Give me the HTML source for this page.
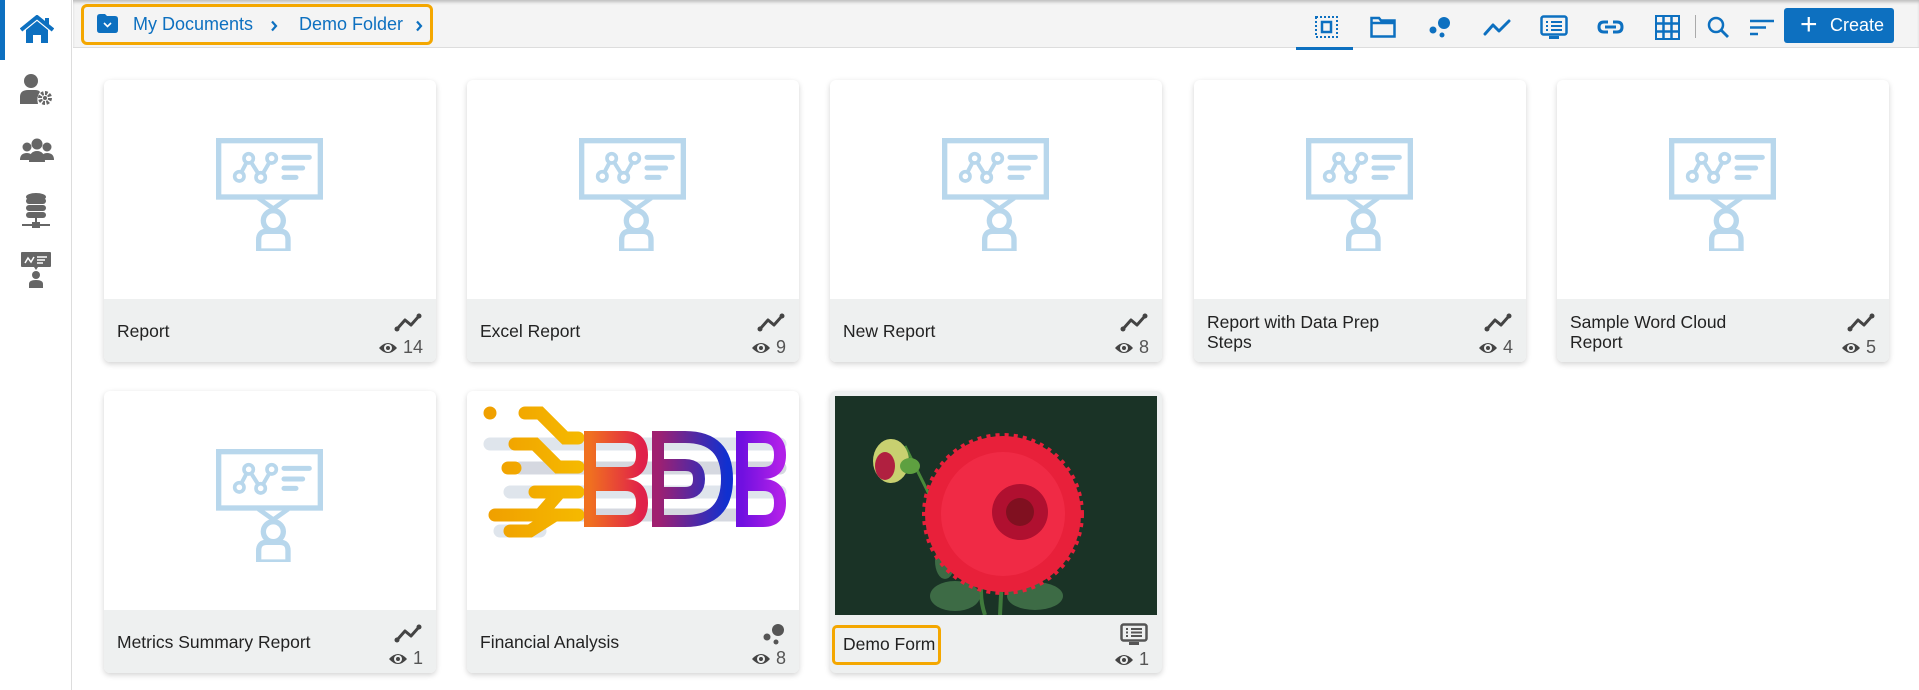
<!DOCTYPE html>
<html><head><meta charset="utf-8"><style>
*{box-sizing:border-box;margin:0;padding:0}
body{width:1919px;height:690px;overflow:hidden;background:#fff;font-family:"Liberation Sans",sans-serif;position:relative}
.side{position:absolute;left:0;top:0;width:72px;height:690px;background:#fff;border-right:1px solid #ddd}
.hdr{position:absolute;left:73px;top:0;width:1846px;height:48px;background:#f4f4f4;border-bottom:1px solid #ddd;box-shadow:inset 0 3px 3px -1px #bbb}
.bc{position:absolute;left:81px;top:4px;width:352px;height:41px;border:3px solid #f4a700;border-radius:6px}
.card{position:absolute;width:332px;height:282px;background:#fff;border-radius:6px;box-shadow:0 2px 6px rgba(0,0,0,.18);overflow:hidden}
.foot{position:absolute;left:0;right:0;bottom:0;height:63px;background:#eef0f0}
.t{position:absolute;left:13px;font-size:17.5px;color:#222;line-height:20px;width:200px}
.ph{position:absolute;left:112px;top:58px}
.tr{position:absolute;right:14px;top:13px}
.cnt{position:absolute;right:13px;top:38px;font-size:18px;color:#555;display:flex;align-items:center;gap:5px}
.ti{position:absolute;top:13px}
</style></head><body>
<div class="side">
<div style="position:absolute;left:0;top:0;width:5px;height:60px;background:#0d70c0"></div>
<svg style="position:absolute;left:20px;top:15px" width="34" height="29" viewBox="0 0 34 29"><path d="M1 15 L17 2 L33 15" fill="none" stroke="#0d70c0" stroke-width="4" stroke-linejoin="round"/><rect x="25" y="3" width="4" height="8" fill="#0d70c0"/><path d="M6 15 L17 6 L28 15 V28 H21 V20 H13 V28 H6Z" fill="#0d70c0"/></svg>
<svg style="position:absolute;left:20px;top:73px" width="32" height="32" viewBox="0 0 32 32"><circle cx="11" cy="8" r="7" fill="#666"/><path d="M0 31 V24 Q0 17 8 17 H15 Q19 17 20 19 Q16 24 18 31Z" fill="#666"/><circle cx="25" cy="25" r="5" fill="none" stroke="#666" stroke-width="4" stroke-dasharray="2.5 1.4"/><circle cx="25" cy="25" r="2" fill="#666"/></svg>
<svg style="position:absolute;left:20px;top:138px" width="34" height="24" viewBox="0 0 34 24"><circle cx="17" cy="6" r="5.5" fill="#666"/><circle cx="7" cy="9" r="4.5" fill="#666"/><circle cx="27" cy="9" r="4.5" fill="#666"/><path d="M9 24 Q9 13 17 13 Q25 13 25 24Z" fill="#666"/><path d="M0 22 Q0 15 7 15 Q11 15 12 18 L10 22Z M34 22 Q34 15 27 15 Q23 15 22 18 L24 22Z" fill="#666"/></svg>
<svg style="position:absolute;left:21px;top:193px" width="30" height="36" viewBox="0 0 30 36"><ellipse cx="15" cy="4" rx="10" ry="4" fill="#666"/><rect x="5" y="5" width="20" height="6" rx="3" fill="#666"/><rect x="5" y="12" width="20" height="6" rx="3" fill="#666"/><rect x="5" y="19" width="20" height="6" rx="3" fill="#666"/><rect x="14" y="25" width="2" height="6" fill="#666"/><rect x="1" y="31" width="28" height="2" fill="#666"/><rect x="11" y="29" width="8" height="6" fill="#666"/></svg>
<svg style="position:absolute;left:21px;top:252px" width="30" height="36" viewBox="0 0 30 36"><rect x="0" y="0" width="30" height="15" rx="1" fill="#666"/><path d="M13 15 L15 18 L17 15Z" fill="#666"/><path d="M4 11 L7 6 L10 10 L13 5 M16 5 H26 M16 8 H24 M16 11 H22" stroke="#fff" stroke-width="1.5" fill="none"/><circle cx="15" cy="23" r="4" fill="#666"/><path d="M8 36 V32 Q8 28 15 28 Q22 28 22 32 V36Z" fill="#666"/></svg>
</div>
<div class="hdr"></div>
<div class="bc">
<svg style="position:absolute;left:13px;top:7px" width="21" height="19" viewBox="0 0 21 19"><path d="M0 3 Q0 0 3 0 H8 L10 2 H18 Q21 2 21 5 V16 Q21 19 18 19 H3 Q0 19 0 16Z" fill="#0d70c0"/><path d="M7 9 L10.5 12.5 L14 9" stroke="#fff" stroke-width="1.6" fill="none"/></svg>
<div style="position:absolute;left:49px;top:7px;font-size:18px;color:#0d70c0;white-space:nowrap">My Documents</div>
<svg style="position:absolute;left:186px;top:13px" width="8" height="12" viewBox="0 0 8 12"><path d="M2 1.5 L6 6 L2 10.5" stroke="#0d70c0" stroke-width="2.2" fill="none"/></svg>
<div style="position:absolute;left:215px;top:7px;font-size:18px;color:#0d70c0;white-space:nowrap">Demo Folder</div>
<svg style="position:absolute;left:331px;top:13px" width="8" height="12" viewBox="0 0 8 12"><path d="M2 1.5 L6 6 L2 10.5" stroke="#0d70c0" stroke-width="2.2" fill="none"/></svg>
</div>
<!-- toolbar -->
<svg style="position:absolute;left:1315px;top:16px" width="23" height="22" viewBox="0 0 23 22"><rect x="1" y="1" width="21" height="20" fill="none" stroke="#0d70c0" stroke-width="2" stroke-dasharray="2 2"/><rect x="7" y="6" width="9" height="10" fill="none" stroke="#0d70c0" stroke-width="2.5"/></svg>
<div style="position:absolute;left:1296px;top:47px;width:57px;height:3px;background:#0d70c0"></div>
<svg style="position:absolute;left:1370px;top:16px" width="26" height="22" viewBox="0 0 26 22"><path d="M1.5 2 H9 L11 4.5 H24.5 V20.5 H1.5Z M1.5 7 H24.5" fill="none" stroke="#0d70c0" stroke-width="2.5"/></svg>
<svg style="position:absolute;left:1429px;top:16px" width="22" height="22" viewBox="0 0 22 22"><circle cx="15" cy="7" r="6" fill="#0d70c0"/><circle cx="4" cy="14" r="3.5" fill="#0d70c0"/><circle cx="13" cy="19" r="2.5" fill="#0d70c0"/></svg>
<svg style="position:absolute;left:1483px;top:18px" width="28" height="18" viewBox="0 0 28 18"><path d="M2 16 L10 7 L16 13 L26 3" fill="none" stroke="#0d70c0" stroke-width="3" stroke-linejoin="round" stroke-linecap="round"/></svg>
<svg style="position:absolute;left:1540px;top:15px" width="28" height="25" viewBox="0 0 28 25"><rect x="1.5" y="1.5" width="25" height="18" rx="2" fill="none" stroke="#0d70c0" stroke-width="2.5"/><path d="M6 7 H8 M11 7 H22 M6 11 H8 M11 11 H22 M6 15 H8 M11 15 H22" stroke="#0d70c0" stroke-width="2"/><rect x="9" y="21" width="10" height="3" fill="#0d70c0"/></svg>
<svg style="position:absolute;left:1597px;top:20px" width="27" height="14" viewBox="0 0 27 14"><path d="M11 2 H7 Q2 2 2 7 Q2 12 7 12 H11 M16 2 H20 Q25 2 25 7 Q25 12 20 12 H16 M8 7 H19" fill="none" stroke="#0d70c0" stroke-width="3"/></svg>
<svg style="position:absolute;left:1655px;top:15px" width="25" height="25" viewBox="0 0 25 25"><rect x="1" y="1" width="23" height="23" fill="none" stroke="#0d70c0" stroke-width="2"/><path d="M8.5 1 V24 M16.5 1 V24 M1 8.5 H24 M1 16.5 H24" stroke="#0d70c0" stroke-width="2.5"/></svg>
<div style="position:absolute;left:1695px;top:15px;width:1px;height:23px;background:#aaa"></div>
<svg style="position:absolute;left:1707px;top:16px" width="23" height="22" viewBox="0 0 23 22"><circle cx="9" cy="9" r="7" fill="none" stroke="#0d70c0" stroke-width="2.5"/><path d="M14 14 L21 21" stroke="#0d70c0" stroke-width="2.8"/></svg>
<svg style="position:absolute;left:1750px;top:19px" width="24" height="17" viewBox="0 0 24 17"><path d="M0 2 H24 M0 8.5 H16 M0 15 H8" stroke="#0d70c0" stroke-width="2.5"/></svg>
<div style="position:absolute;left:1784px;top:8px;width:110px;height:35px;background:#0d70c0;border-radius:3px;color:#fff;font-size:18px;line-height:35px"><span style="position:absolute;left:16px;top:-1px;font-size:30px;font-weight:300">+</span><span style="position:absolute;left:46px">Create</span></div>

<svg width="0" height="0" style="position:absolute"><defs>
<g id="ph" fill="none" stroke="#b8d7ec">
<rect x="8" y="8" width="305" height="169" stroke-width="16"/>
<path d="M70 115 L98 61 L134 118 L167 61" stroke-width="12"/>
<circle cx="70" cy="115" r="14" stroke-width="11" fill="#fff"/><circle cx="98" cy="61" r="14" stroke-width="11" fill="#fff"/><circle cx="134" cy="118" r="14" stroke-width="11" fill="#fff"/><circle cx="167" cy="61" r="14" stroke-width="11" fill="#fff"/>
<path d="M204 58 H280 M204 90 H260 M204 118 H240" stroke-width="15" stroke-linecap="round"/>
<path d="M127 180 L172 212 L217 180" stroke-width="14"/>
<circle cx="172" cy="248" r="30" stroke-width="16"/>
<path d="M128 339 V305 Q128 280 152 280 H192 Q216 280 216 305 V339Z" stroke-width="16"/>
</g>
<g id="trend"><path d="M3 17 L11 8 L17 13 L25 4" fill="none" stroke="#444" stroke-width="3" stroke-linecap="round" stroke-linejoin="round"/><circle cx="3" cy="17" r="2.5" fill="#444"/><circle cx="25" cy="4" r="2.5" fill="#444"/></g>
<g id="eye"><path d="M1 8 Q10 -2 19 8 Q10 18 1 8Z" fill="#444"/><circle cx="10" cy="8" r="4" fill="#eef0f0"/><circle cx="10" cy="8" r="2" fill="#444"/></g>
</defs></svg>

<!-- row 1 -->
<div class="card" style="left:104px;top:80px"><svg class="ph" width="107" height="113" viewBox="0 0 321 339"><use href="#ph"/></svg><div class="foot"><div class="t" style="top:22px">Report</div><svg class="tr" width="28" height="20"><use href="#trend"/></svg><div class="cnt"><svg width="20" height="16"><use href="#eye"/></svg>14</div></div></div>
<div class="card" style="left:467px;top:80px"><svg class="ph" width="107" height="113" viewBox="0 0 321 339"><use href="#ph"/></svg><div class="foot"><div class="t" style="top:22px">Excel Report</div><svg class="tr" width="28" height="20"><use href="#trend"/></svg><div class="cnt"><svg width="20" height="16"><use href="#eye"/></svg>9</div></div></div>
<div class="card" style="left:830px;top:80px"><svg class="ph" width="107" height="113" viewBox="0 0 321 339"><use href="#ph"/></svg><div class="foot"><div class="t" style="top:22px">New Report</div><svg class="tr" width="28" height="20"><use href="#trend"/></svg><div class="cnt"><svg width="20" height="16"><use href="#eye"/></svg>8</div></div></div>
<div class="card" style="left:1194px;top:80px"><svg class="ph" width="107" height="113" viewBox="0 0 321 339"><use href="#ph"/></svg><div class="foot"><div class="t" style="top:13px">Report with Data Prep Steps</div><svg class="tr" width="28" height="20"><use href="#trend"/></svg><div class="cnt"><svg width="20" height="16"><use href="#eye"/></svg>4</div></div></div>
<div class="card" style="left:1557px;top:80px"><svg class="ph" width="107" height="113" viewBox="0 0 321 339"><use href="#ph"/></svg><div class="foot"><div class="t" style="top:13px">Sample Word Cloud Report</div><svg class="tr" width="28" height="20"><use href="#trend"/></svg><div class="cnt"><svg width="20" height="16"><use href="#eye"/></svg>5</div></div></div>

<!-- row 2 -->
<div class="card" style="left:104px;top:391px"><svg class="ph" width="107" height="113" viewBox="0 0 321 339"><use href="#ph"/></svg><div class="foot"><div class="t" style="top:22px">Metrics Summary Report</div><svg class="tr" width="28" height="20"><use href="#trend"/></svg><div class="cnt"><svg width="20" height="16"><use href="#eye"/></svg>1</div></div></div>
<div class="card" style="left:467px;top:391px">
<svg style="position:absolute;left:13px;top:14px" width="307" height="136" viewBox="0 0 307 136">
<defs><linearGradient id="g1" x1="0" x2="1"><stop offset="0" stop-color="#f0a000"/><stop offset="1" stop-color="#f5b800"/></linearGradient>
<linearGradient id="g2" x1="0" x2="1"><stop offset="0" stop-color="#f07020"/><stop offset="1" stop-color="#e0204a"/></linearGradient>
<linearGradient id="g3" x1="0" x2="1"><stop offset="0" stop-color="#a02070"/><stop offset="1" stop-color="#1030d0"/></linearGradient>
<linearGradient id="g4" x1="0" x2="1"><stop offset="0" stop-color="#7010e0"/><stop offset="1" stop-color="#b020e8"/></linearGradient></defs>
<g stroke-linecap="round" fill="none" stroke-width="13">
<path d="M10 39 H300 M30 87 H300 M20 126 H60" stroke="#dfe5ec"/>
<path d="M40 63 H300 M20 110 H260" stroke="#d5d8e0"/>
<path d="M10 8 H10 M45 8 H60 L85 33 H98 M35 39 H55 L78 62 H98 M28 63 H35 M55 87 H98 M80 87 L60 110 H15 M98 110 H75 L50 126 H30" stroke="url(#g1)"/>
<path d="M110 32 H145 Q162 32 162 50 Q162 68 145 68 H110Z M110 80 H145 Q162 80 162 98 Q162 116 145 116 H110Z" stroke="url(#g2)" stroke-width="12" stroke-linecap="butt"/>
<path d="M178 32 H205 Q247 32 247 74 Q247 116 205 116 H178Z M178 60 H205 Q219 60 219 74 Q219 88 205 88 H178" stroke="url(#g3)" stroke-width="12" stroke-linecap="butt"/>
<path d="M262 32 H283 Q300 32 300 50 Q300 68 283 68 H262Z M262 80 H283 Q300 80 300 98 Q300 116 283 116 H262Z" stroke="url(#g4)" stroke-width="12" stroke-linecap="butt"/>
</g></svg>
<div class="foot"><div class="t" style="top:22px">Financial Analysis</div><svg class="ti" style="right:14px" width="22" height="22"><circle cx="15" cy="7" r="6" fill="#555"/><circle cx="4" cy="14" r="3.5" fill="#555"/><circle cx="13" cy="19" r="2.5" fill="#555"/></svg><div class="cnt"><svg width="20" height="16"><use href="#eye"/></svg>8</div></div></div>
<div class="card" style="left:830px;top:391px;background:#eef0f0">
<div style="position:absolute;left:5px;top:5px;width:322px;height:219px;background:#1a3326;overflow:hidden">
<svg width="322" height="219" viewBox="0 0 322 219">
<path d="M150 219 Q140 190 155 160 M165 219 L168 160" stroke="#3f7a3c" stroke-width="4" fill="none"/>
<ellipse cx="120" cy="200" rx="25" ry="15" fill="#3d6b45"/><ellipse cx="200" cy="200" rx="28" ry="14" fill="#3d6b45"/><ellipse cx="110" cy="165" rx="10" ry="18" fill="#3d6b45"/>
<path d="M70 50 L100 110" stroke="#4a8a3a" stroke-width="3"/>
<circle cx="168" cy="118" r="78" fill="#e8203a" stroke="#e8203a" stroke-width="6" stroke-dasharray="4 5"/>
<circle cx="168" cy="118" r="62" fill="#f02a45"/>
<circle cx="185" cy="116" r="28" fill="#b01030"/><circle cx="185" cy="116" r="14" fill="#801020"/>
<ellipse cx="56" cy="65" rx="18" ry="22" fill="#c8d070"/><ellipse cx="50" cy="70" rx="10" ry="14" fill="#b02040"/><ellipse cx="75" cy="70" rx="10" ry="8" fill="#5ea040"/>
</svg></div>
<div style="position:absolute;left:2px;top:234px;width:109px;height:40px;border:3px solid #f4a700;border-radius:5px"></div>
<div class="t" style="left:13px;top:243px">Demo Form</div>
<svg class="ti" style="right:14px;top:232px;position:absolute" width="28" height="22" viewBox="0 0 28 22"><rect x="1.5" y="1.5" width="25" height="16" rx="2" fill="none" stroke="#555" stroke-width="2.5"/><path d="M6 6 H8 M11 6 H22 M6 9.5 H8 M11 9.5 H22 M6 13 H8 M11 13 H22" stroke="#555" stroke-width="2"/><rect x="9" y="19" width="10" height="3" fill="#555"/></svg>
<div class="cnt" style="top:258px"><svg width="20" height="16"><use href="#eye"/></svg>1</div>
</div>
</body></html>
